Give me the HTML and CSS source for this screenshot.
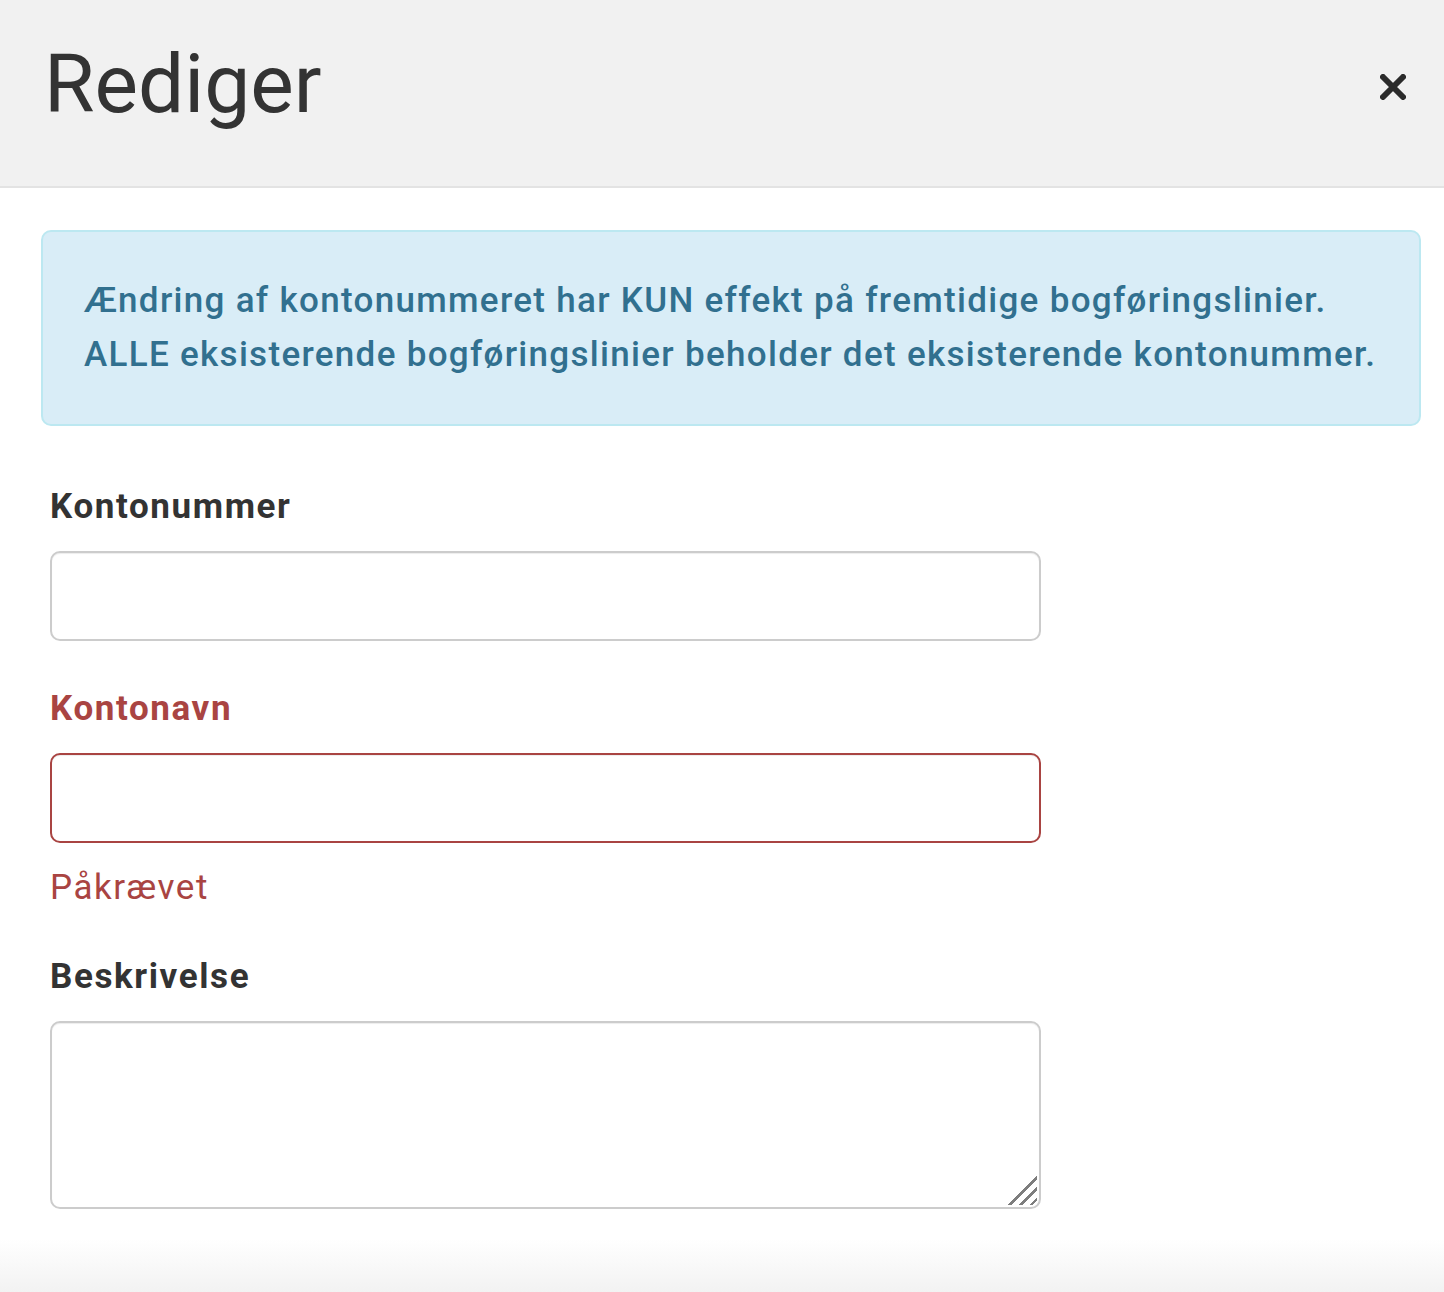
FILE: index.html
```html
<!DOCTYPE html>
<html lang="da">
	<head>
		<meta charset="utf-8">
		<title>Rediger</title>
		<link rel="stylesheet" href="styles.css">
	</head>
	<body>
		<div class="modal">
			<div class="modal-header">
				<h1 class="modal-title">Rediger</h1>
				<button class="close" title="Luk">
					<svg viewBox="0 0 26 26" aria-hidden="true"><path d="M3 3L23 23M23 3L3 23" stroke="currentColor" stroke-width="6" stroke-linecap="round"/></svg>
				</button>
			</div>
			<div class="modal-body">
				<div class="alert">
					Ændring af kontonummeret har KUN effekt på fremtidige bogføringslinier.<br>
					ALLE eksisterende bogføringslinier beholder det eksisterende kontonummer.
				</div>
				<form class="form">
					<div class="form-group">
						<label for="number">Kontonummer</label>
						<input id="number" class="form-control" type="text">
					</div>
					<div class="form-group has-error">
						<label for="name">Kontonavn</label>
						<input id="name" class="form-control" type="text">
						<span class="help-block">Påkrævet</span>
					</div>
					<div class="form-group">
						<label for="description">Beskrivelse</label>
						<div class="textarea-wrap">
							<textarea id="description" class="form-control"></textarea>
						</div>
					</div>
				</form>
			</div>
			<div class="modal-footer"></div>
		</div>
	</body>
</html>
```

FILE: styles.css
```css
html
{
	font-family: "Roboto", "Liberation Sans", sans-serif;
	color: #333;
}

body
{
	margin: 0;
	background: #fff;
}

.modal-header
{
	display: flex;
	justify-content: space-between;
	align-items: flex-start;
	height: 188px;
	box-sizing: border-box;
	padding: 43px 38px 0 44px;
	background: #f1f1f1;
	border-bottom: 2px solid #e3e3e3;
}

.modal-title
{
	margin: 0;
	font-size: 82px;
	font-weight: normal;
	line-height: 82px;
	color: #333;
}

.close
{
	border: none;
	background: transparent;
	padding: 0;
	margin-top: 31px;
	width: 26px;
	height: 26px;
	color: #2b2b2b;
	cursor: pointer;
}

.close svg
{
	display: block;
	width: 26px;
	height: 26px;
}

.modal-body
{
	padding: 42px 23px 0 41px;
}

.alert
{
	padding: 42px 41px;
	background: #d9edf7;
	border: 2px solid #bce8f1;
	border-radius: 10px;
	color: #31708f;
	font-size: 35px;
	font-weight: 500;
	letter-spacing: 1.3px;
	line-height: 54px;
	margin-bottom: 59px;
}

.form
{
	padding: 0 9px;
}

.form-group
{
	width: 991px;
	margin-bottom: 46px;
}

.form-group:last-child
{
	margin-bottom: 30px;
}

label
{
	display: block;
	font-size: 35px;
	font-weight: bold;
	letter-spacing: 1.6px;
	line-height: 43px;
	margin-bottom: 23px;
}

.form-control
{
	display: block;
	width: 100%;
	height: 90px;
	box-sizing: border-box;
	border: 2px solid #ccc;
	border-radius: 10px;
	background: #fff;
	font-family: inherit;
	font-size: 35px;
	padding: 0 20px;
	box-shadow: inset 0 1px 1px rgba(0, 0, 0, 0.075);
}

.textarea-wrap
{
	position: relative;
}

textarea.form-control
{
	height: 188px;
	padding: 14px 20px;
	resize: none;
}

/* resize grip, drawn at the scale of the page */
.textarea-wrap::after
{
	content: "";
	position: absolute;
	right: 4px;
	bottom: 4px;
	width: 34px;
	height: 34px;
	background: repeating-linear-gradient(135deg, transparent 0 5px, #7d7d7d 5px 7.5px);
	clip-path: polygon(100% 0, 100% 100%, 0 100%);
	pointer-events: none;
}

.has-error label,
.has-error .help-block
{
	color: #a94442;
}

.has-error .form-control
{
	border-color: #a94442;
}

.help-block
{
	display: block;
	font-size: 35px;
	letter-spacing: 1.5px;
	line-height: 43px;
	margin-top: 23px;
}

.modal-footer
{
	height: 54px;
	background: linear-gradient(#fff 0, #f2f2f2 100%);
}
```
